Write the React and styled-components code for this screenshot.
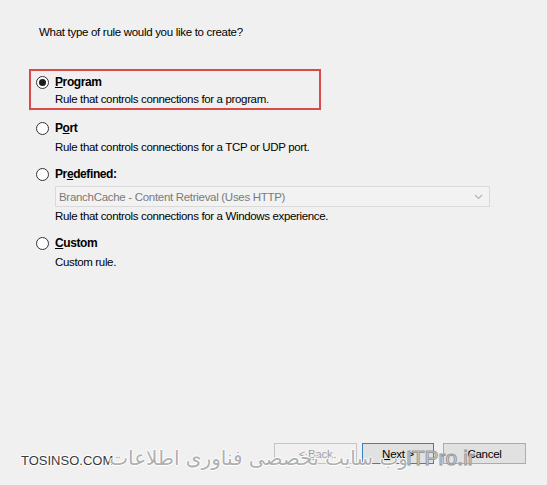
import styled, { createGlobalStyle } from "styled-components";

const GlobalStyle = createGlobalStyle`
  html, body {
    margin: 0;
    padding: 0;
    background: #f0f0f0;
  }
  body {
    font-family: "Liberation Sans", Arial, sans-serif;
    font-size: 11.5px;
    color: #000;
  }
`;

const Page = styled.div`
  position: relative;
  width: 547px;
  height: 485px;
  background: #f0f0f0;
  overflow: hidden;
  display: flex;
  flex-direction: column;
`;

const Title = styled.div`
  margin: 25px 0 0 39px;
  line-height: 15px;
  letter-spacing: -0.3px;
`;

const OptionList = styled.div`
  display: flex;
  flex-direction: column;
  padding-left: 36px;
  margin-top: 34px;
`;

const Option = styled.div`
  position: relative;
  margin-top: ${(p) => p.$gap}px;
`;

const Highlight = styled.div`
  position: absolute;
  left: -7px;
  top: -5px;
  width: 292px;
  height: 41px;
  box-sizing: border-box;
  border: 2px solid #d94a48;
  pointer-events: none;
`;

const LabelRow = styled.div`
  display: flex;
  align-items: center;
  height: 16px;
`;

const Radio = styled.span`
  width: 13px;
  height: 13px;
  box-sizing: border-box;
  border-radius: 50%;
  border: 1px solid #333;
  background: #fff;
  display: flex;
  align-items: center;
  justify-content: center;
  margin-right: 6px;
  &::after {
    content: "";
    display: ${(p) => (p.$checked ? "block" : "none")};
    width: 7px;
    height: 7px;
    border-radius: 50%;
    background: #1b1b1b;
  }
`;

const Label = styled.span`
  font-size: 12px;
  font-weight: bold;
  letter-spacing: -0.4px;
  u {
    text-decoration: underline;
  }
`;

const Desc = styled.div`
  margin-left: 19px;
  margin-top: ${(p) => p.$gap}px;
  line-height: 16px;
  letter-spacing: -0.35px;
`;

const Combo = styled.div`
  margin: 4px 0 0 19px;
  width: 435px;
  height: 21px;
  box-sizing: border-box;
  border: 1px solid #dadada;
  background: #f2f2f2;
  color: #7a7a7a;
  display: flex;
  align-items: center;
  justify-content: space-between;
  padding: 0 6px 0 3px;
  letter-spacing: -0.3px;
`;

const Footer = styled.div`
  margin-top: auto;
  display: flex;
  justify-content: flex-end;
  gap: 5px;
  padding: 0 21px 21px 0;
`;

const Button = styled.button`
  font-family: inherit;
  font-size: 11.5px;
  width: ${(p) => p.$w}px;
  height: 21px;
  box-sizing: border-box;
  border: 1px solid ${(p) => (p.$primary ? "#3c80c4" : p.disabled ? "#c4c4c4" : "#acacac")};
  background: ${(p) => (p.disabled ? "#f0f0f0" : "#e1e1e1")};
  color: ${(p) => (p.disabled ? "#a0a0a0" : "#000")};
  margin-left: ${(p) => p.$ml || 0}px;
  padding: 0;
  letter-spacing: -0.3px;
`;

const Watermark = styled.div`
  position: absolute;
  left: 21px;
  top: 446px;
  display: flex;
  align-items: baseline;
  pointer-events: none;
  white-space: nowrap;
`;

const Mark = styled.span`
  font-family: ${(p) => p.$font};
  font-size: ${(p) => p.$size}px;
  color: ${(p) => p.$color};
  margin-left: ${(p) => p.$ml || 0}px;
  text-shadow: -1px 0 #fff, 1px 0 #fff, 0 -1px #fff, 0 1px #fff;
  ${(p) => p.$hollow && `
    color: #d8d8d8;
    -webkit-text-stroke: 1px #9a9a9a;
    text-shadow: none;
  `}
`;

const Chevron = () => (
  <svg width="9" height="6" viewBox="0 0 9 6">
    <path d="M1 1 L4.5 4.5 L8 1" fill="none" stroke="#b5b5b5" strokeWidth="1.2" />
  </svg>
);

const App = () => (
  <>
    <GlobalStyle />
    <Page>
      <Title>What type of rule would you like to create?</Title>
      <OptionList>
        <Option $gap={0}>
          <Highlight />
          <LabelRow>
            <Radio $checked />
            <Label><u>P</u>rogram</Label>
          </LabelRow>
          <Desc $gap={1}>Rule that controls connections for a program.</Desc>
        </Option>
        <Option $gap={13}>
          <LabelRow>
            <Radio />
            <Label>P<u>o</u>rt</Label>
          </LabelRow>
          <Desc $gap={3}>Rule that controls connections for a TCP or UDP port.</Desc>
        </Option>
        <Option $gap={11}>
          <LabelRow>
            <Radio />
            <Label>Pr<u>e</u>defined:</Label>
          </LabelRow>
          <Combo>
            <span>BranchCache - Content Retrieval (Uses HTTP)</span>
            <Chevron />
          </Combo>
          <Desc $gap={1}>Rule that controls connections for a Windows experience.</Desc>
        </Option>
        <Option $gap={11}>
          <LabelRow>
            <Radio />
            <Label><u>C</u>ustom</Label>
          </LabelRow>
          <Desc $gap={3}>Custom rule.</Desc>
        </Option>
      </OptionList>
      <Footer>
        <Button $w={83} disabled>&lt; <u>B</u>ack</Button>
        <Button $w={72} $primary><u>N</u>ext &gt;</Button>
        <Button $w={83} $ml={4}>Cancel</Button>
      </Footer>
      <Watermark>
        <Mark $font={'"Liberation Sans", Arial, sans-serif'} $size={13} $color="#3a3a3a">TOSINSO.COM</Mark>
        <Mark $font={'"DejaVu Sans", sans-serif'} $size={20} $color="#b0b0b0" $ml={-4} dir="rtl">وب سایت تخصصی فناوری اطلاعات</Mark>
        <Mark $font={'"Liberation Sans", Arial, sans-serif'} $size={21} $hollow $ml={-2}>ITPro.ir</Mark>
      </Watermark>
    </Page>
  </>
);

export default App;
